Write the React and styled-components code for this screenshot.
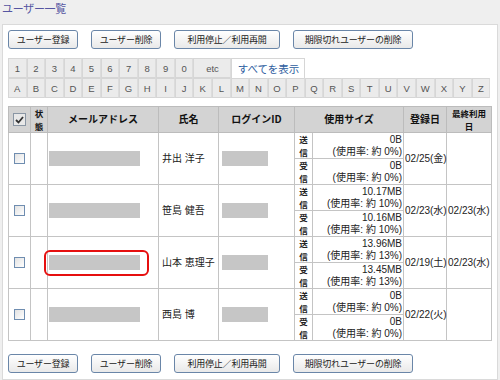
import React from 'react';
import styled, { createGlobalStyle } from 'styled-components';

const GlobalStyle = createGlobalStyle`
  body {
    margin: 0;
    background: #efefef;
    font-family: "Liberation Sans", "Noto Sans CJK JP", sans-serif;
    color: #222;
  }
`;

const Page = styled.div`
  width: 500px;
  height: 380px;
  overflow: hidden;
  box-sizing: border-box;
`;

const Title = styled.h1`
  margin: 0;
  padding: 2px 2px 0;
  height: 24px;
  box-sizing: border-box;
  font-size: 11px;
  line-height: 14px;
  font-weight: normal;
  color: #5656a2;
  letter-spacing: -0.3px;
`;

const Panel = styled.div`
  margin: 0 2px;
  border: 1px solid #dadada;
  background: #fff;
  padding: 5px 5px 6px 5px;
`;

const ButtonBar = styled.div`
  display: flex;
  gap: 13px;
  ${({ bottom }) => bottom && 'margin-top: 13px;'}
`;

const Button = styled.button`
  width: ${({ w }) => w}px;
  height: 19px;
  padding: 0;
  border: 1px solid #6a86a8;
  border-radius: 3px;
  background: linear-gradient(#ffffff, #e9e9e9);
  font-family: "Noto Sans CJK JP", sans-serif;
  font-size: 9px;
  line-height: 17px;
  color: #222;
  letter-spacing: -0.2px;
`;

const Tabs = styled.div`
  margin-top: 9px;
`;

const TabRow = styled.div`
  display: flex;
  height: 20px;
`;

const Tab = styled.div`
  width: ${({ w }) => w || 18.55}px;
  box-sizing: border-box;
  background: #ebebeb;
  border: 1px solid #d6d6d6;
  border-right-color: #dcdcdc;
  display: flex;
  align-items: center;
  justify-content: center;
  font-size: 9.5px;
  color: #555;
`;

const AllTab = styled.div`
  width: 74px;
  box-sizing: border-box;
  border: 1px solid #d6d6d6;
  border-bottom: none;
  background: #fff;
  display: flex;
  align-items: center;
  justify-content: center;
  font-family: "Noto Sans CJK JP", sans-serif;
  font-size: 10.5px;
  color: #2c5c9e;
`;

const Table = styled.table`
  margin-top: 8px;
  width: 483px;
  table-layout: fixed;
  border-collapse: collapse;
  border: 1px solid #bcbcbc;
  font-size: 10px;
`;

const Th = styled.th`
  height: 25px;
  background: #d3d3d3;
  border: 1px solid #bcbcbc;
  padding: 0 1px;
  font-family: "Noto Sans CJK JP", sans-serif;
  font-size: ${({ small }) => (small ? 8.5 : 10)}px;
  line-height: 12.5px;
  font-weight: bold;
  text-align: center;
  color: #111;
`;

const Td = styled.td`
  border: 1px solid #c4c4c4;
  padding: 0 ${({ pad }) => (pad === undefined ? 2 : pad)}px;
  text-align: ${({ align }) => align || 'left'};
  vertical-align: middle;
  font-family: "Liberation Sans", "Noto Sans CJK JP", sans-serif;
  font-size: 10px;
  line-height: 12px;
  white-space: nowrap;
`;

const LabelTd = styled(Td)`
  height: 25px;
  font-family: "Noto Sans CJK JP", sans-serif;
  font-size: 8.5px;
  font-weight: bold;
  line-height: 12.5px;
  text-align: center;
  padding: 0;
`;

const Box = styled.span`
  display: block;
  margin: 0 auto;
  width: 9px;
  height: 9px;
  border: 1px solid #6f8db0;
  background: linear-gradient(135deg, #e2e2e2, #ffffff);
`;

const HeadBox = styled.span`
  display: flex;
  align-items: center;
  justify-content: center;
  margin: 0 auto;
  width: 11px;
  height: 11px;
  border: 1px solid #8a96a4;
  background: #e8e8e8;
`;

const Mask = styled.div`
  width: ${({ w }) => w}px;
  height: 15px;
  background: #c6c6c6;
`;

const MaskWrap = styled.div`
  position: relative;
  width: 91px;
`;

const Ring = styled.div`
  position: absolute;
  left: -5px;
  top: -5px;
  right: -9px;
  bottom: -6px;
  border: 2px solid #e60f0f;
  border-radius: 6px;
`;

const users = [
  { name: '井出 洋子', send: ['0B', '約 0%'], recv: ['0B', '約 0%'], reg: '02/25(金)', last: '' },
  { name: '笹島 健吾', send: ['10.17MB', '約 10%'], recv: ['10.16MB', '約 10%'], reg: '02/23(水)', last: '02/23(水)' },
  { name: '山本 恵理子', send: ['13.96MB', '約 13%'], recv: ['13.45MB', '約 13%'], reg: '02/19(土)', last: '02/23(水)', marked: true },
  { name: '西島 博', send: ['0B', '約 0%'], recv: ['0B', '約 0%'], reg: '02/22(火)', last: '' },
];

const Buttons = ({ bottom }) => (
  <ButtonBar bottom={bottom}>
    <Button w={70}>ユーザー登録</Button>
    <Button w={70}>ユーザー削除</Button>
    <Button w={106}>利用停止／利用再開</Button>
    <Button w={120}>期限切れユーザーの削除</Button>
  </ButtonBar>
);

const Usage = ({ data }) => (
  <>
    {data[0]}
    <br />
    (使用率: {data[1]})
  </>
);

const Label = ({ a, b }) => (
  <>
    {a}
    <br />
    {b}
  </>
);

export default function App() {
  const digits = ['1', '2', '3', '4', '5', '6', '7', '8', '9', '0'];
  const letters = 'ABCDEFGHIJKLMNOPQRSTUVWXYZ'.split('');
  return (
    <Page>
      <GlobalStyle />
      <Title>ユーザー一覧</Title>
      <Panel>
        <Buttons />
        <Tabs>
          <TabRow>
            {digits.map((d) => <Tab key={d}>{d}</Tab>)}
            <Tab w={38}>etc</Tab>
            <AllTab>すべてを表示</AllTab>
          </TabRow>
          <TabRow>
            {letters.map((l) => <Tab key={l}>{l}</Tab>)}
          </TabRow>
        </Tabs>
        <Table>
          <colgroup>
            <col style={{ width: 22 }} />
            <col style={{ width: 17 }} />
            <col style={{ width: 111 }} />
            <col style={{ width: 60 }} />
            <col style={{ width: 76 }} />
            <col style={{ width: 18 }} />
            <col style={{ width: 91 }} />
            <col style={{ width: 43 }} />
            <col style={{ width: 45 }} />
          </colgroup>
          <thead>
            <tr>
              <Th>
                <HeadBox>
                  <svg width="9" height="8" viewBox="0 0 9 8">
                    <path d="M1 4 L3.5 6.5 L8 1" fill="none" stroke="#333" strokeWidth="1.8" />
                  </svg>
                </HeadBox>
              </Th>
              <Th small><Label a="状" b="態" /></Th>
              <Th>メールアドレス</Th>
              <Th>氏名</Th>
              <Th>ログインID</Th>
              <Th colSpan={2}>使用サイズ</Th>
              <Th>登録日</Th>
              <Th small>最終利用<br />日</Th>
            </tr>
          </thead>
          <tbody>
            {users.map((u) => (
              <React.Fragment key={u.name}>
                <tr>
                  <Td rowSpan={2}><Box /></Td>
                  <Td rowSpan={2} />
                  <Td rowSpan={2} pad={1}>
                    <MaskWrap>
                      <Mask w={91} />
                      {u.marked && <Ring />}
                    </MaskWrap>
                  </Td>
                  <Td rowSpan={2} pad={3}>{u.name}</Td>
                  <Td rowSpan={2} pad={3}><Mask w={46} /></Td>
                  <LabelTd><Label a="送" b="信" /></LabelTd>
                  <Td align="right" pad={1}><Usage data={u.send} /></Td>
                  <Td rowSpan={2} pad={1}>{u.reg}</Td>
                  <Td rowSpan={2} pad={1}>{u.last}</Td>
                </tr>
                <tr>
                  <LabelTd><Label a="受" b="信" /></LabelTd>
                  <Td align="right" pad={1}><Usage data={u.recv} /></Td>
                </tr>
              </React.Fragment>
            ))}
          </tbody>
        </Table>
        <Buttons bottom />
      </Panel>
    </Page>
  );
}
